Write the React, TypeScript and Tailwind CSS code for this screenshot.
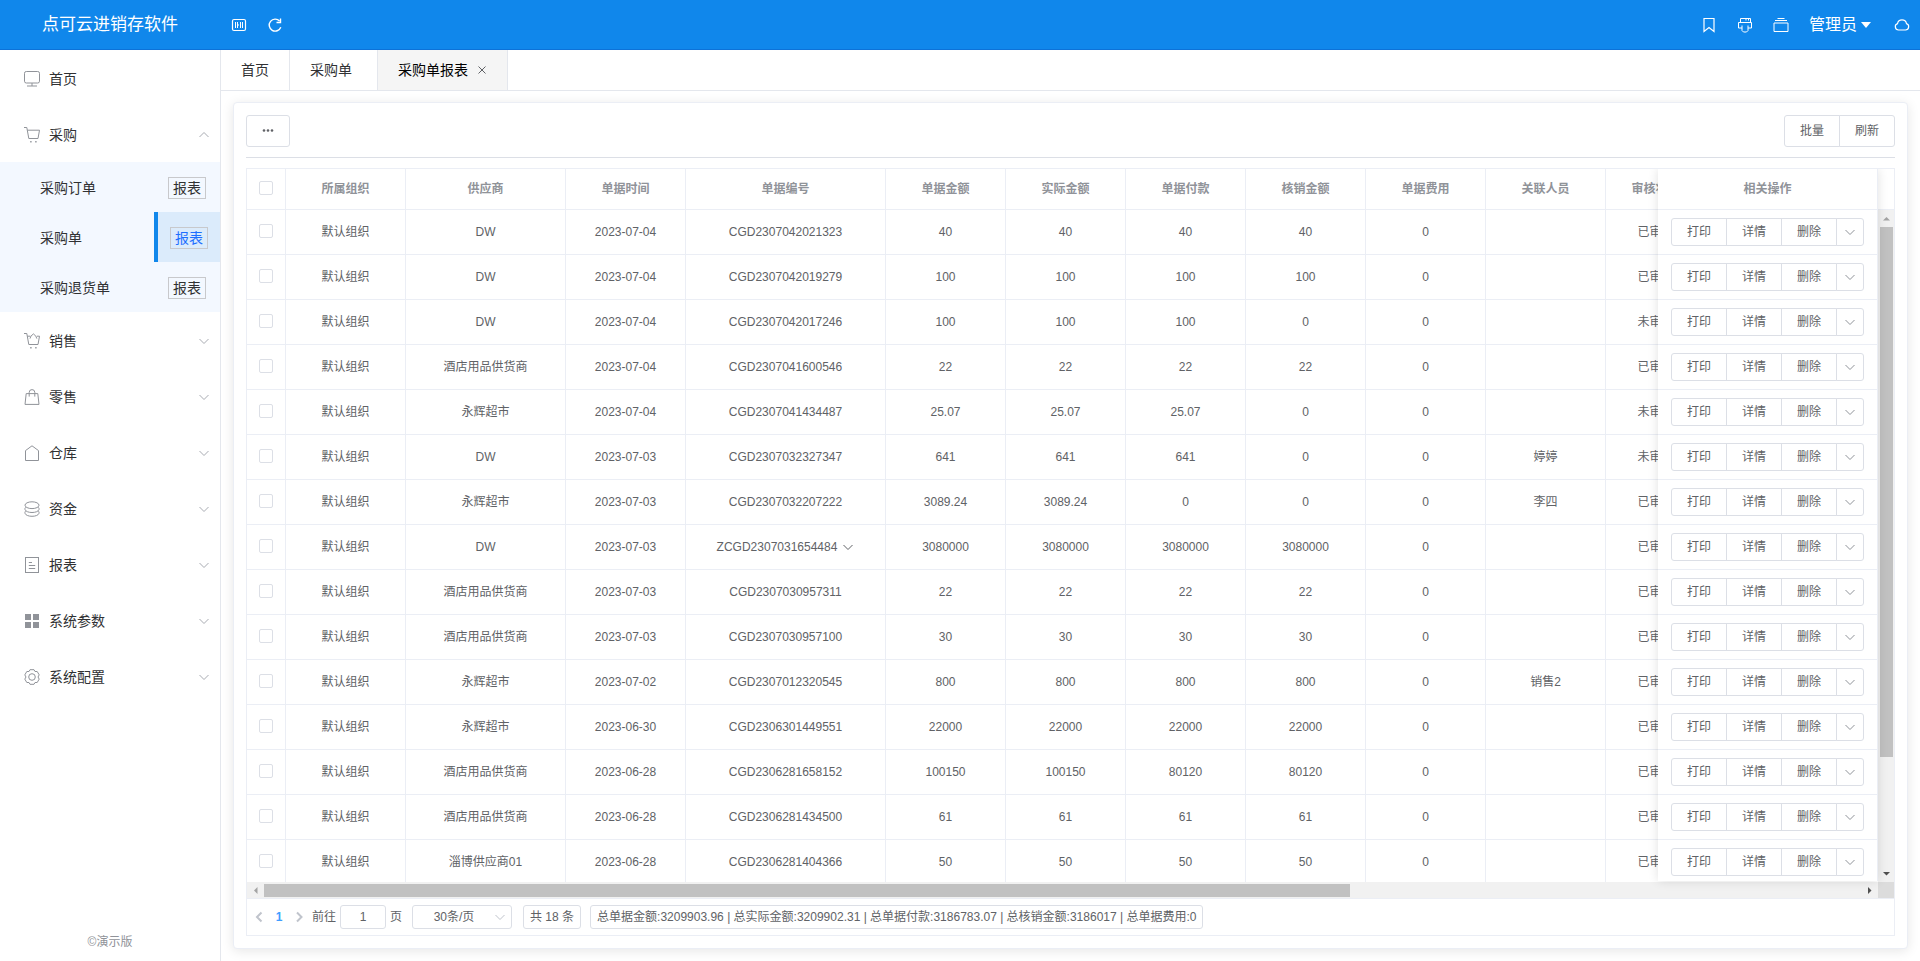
import type { ReactNode } from 'react';

type IconName =
  | 'monitor'
  | 'cart'
  | 'cartFull'
  | 'bag'
  | 'house'
  | 'coin'
  | 'report'
  | 'grid'
  | 'setting';

const ICONS: Record<IconName, ReactNode> = {
  monitor: (
    <>
      <rect x="0.5" y="0.5" width="15" height="11.5" rx="1.8" />
      <path d="M8 12v3M3 15h10" />
    </>
  ),
  cart: (
    <>
      <path d="M0 .5h2.8l2 11h9.2l1.5-8.3H3.4" />
      <path d="M6.2 14.8h1.4M11.2 14.8h1.4" strokeWidth="1.4" />
    </>
  ),
  cartFull: (
    <>
      <path d="M0 .5h2.8l2 11h9.2l1.5-8.3h-2.7M6.4 3.2h-3M6 5.6l.9-2.4L9.4.9l2.5 2.3.9 2.4" />
      <path d="M6.2 14.8h1.4M11.2 14.8h1.4" strokeWidth="1.4" />
    </>
  ),
  bag: (
    <>
      <path d="M2.2 4.6h11.6l1.2 10.8H1z" />
      <path d="M5.2 7.6V3.4a2.8 2.8 0 0 1 5.6 0v4.2" />
    </>
  ),
  house: <path d="M8 .8l6.5 4.8v9.9h-13V5.6z" />,
  coin: (
    <>
      <ellipse cx="8" cy="4.2" rx="7" ry="3.4" />
      <path d="M1.8 6.2C.9 7 .8 7.8 1 8.5c.6 1.9 3.500 3 7 3s6.400-1.100 7-3c.2-.7.1-1.500-.8-2.300" />
      <path d="M1.800 10C.9 10.800.8 11.600 1 12.300c.6 1.900 3.500 3 7 3s6.400-1.100 7-3c.2-.7.1-1.500-.8-2.300" />
    </>
  ),
  report: (
    <>
      <rect x="1.5" y="0.5" width="13" height="15" />
      <path d="M4.8 5.5H8M4.800 8.500h6.400M4.800 11.500h6.400" />
    </>
  ),
  grid: <path d="M1 1h6v6H1zM9 1h6v6H9zM1 9h6v6H1zM9 9h6v6H9z" fill="currentColor" stroke="none" />,
  setting: (
    <>
      <path
        d="M6 .7h4l1 1.8h2.2l2 3.4L14 8l1.2 2.1-2 3.4H11l-1 1.8H6l-1-1.8H2.8l-2-3.4L2 8 .8 5.9l2-3.4H5z"
        strokeLinejoin="round"
      />
      <circle cx="8" cy="8" r="3.3" />
    </>
  ),
};

function Icon({ children, className = 'size-4' }: { children: ReactNode; className?: string }) {
  return (
    <svg viewBox="0 0 16 16" className={className} fill="none" stroke="currentColor" strokeWidth="1" aria-hidden="true">
      {children}
    </svg>
  );
}

function Chevron({ dir = 'down', className = 'size-3' }: { dir?: 'up' | 'down' | 'left' | 'right'; className?: string }) {
  const paths = {
    up: 'M1.5 8L6 3.5 10.5 8',
    down: 'M1.5 4L6 8.5 10.5 4',
    left: 'M8.5 1.5L4 6l4.5 4.5',
    right: 'M4 1.5L8.5 6 4 10.5',
  };
  return (
    <svg viewBox="0 0 12 12" className={className} fill="none" stroke="currentColor" aria-hidden="true">
      <path d={paths[dir]} />
    </svg>
  );
}

const MENU: { icon: IconName; label: string }[] = [
  { icon: 'cartFull', label: '销售' },
  { icon: 'bag', label: '零售' },
  { icon: 'house', label: '仓库' },
  { icon: 'coin', label: '资金' },
  { icon: 'report', label: '报表' },
  { icon: 'grid', label: '系统参数' },
  { icon: 'setting', label: '系统配置' },
];

const SUBMENU = [
  { label: '采购订单', active: false },
  { label: '采购单', active: true },
  { label: '采购退货单', active: false },
];

const COLUMNS = [
  { label: '所属组织', width: 120 },
  { label: '供应商', width: 160 },
  { label: '单据时间', width: 120 },
  { label: '单据编号', width: 200 },
  { label: '单据金额', width: 120 },
  { label: '实际金额', width: 120 },
  { label: '单据付款', width: 120 },
  { label: '核销金额', width: 120 },
  { label: '单据费用', width: 120 },
  { label: '关联人员', width: 120 },
  { label: '审核状态', width: 100 },
];

// supplier, date, number, amount, actual, paid, settled, fee, person, status
const ROWS = [
  ['DW', '2023-07-04', 'CGD2307042021323', '40', '40', '40', '40', '0', '', '已审核'],
  ['DW', '2023-07-04', 'CGD2307042019279', '100', '100', '100', '100', '0', '', '已审核'],
  ['DW', '2023-07-04', 'CGD2307042017246', '100', '100', '100', '0', '0', '', '未审核'],
  ['酒店用品供货商', '2023-07-04', 'CGD2307041600546', '22', '22', '22', '22', '0', '', '已审核'],
  ['永辉超市', '2023-07-04', 'CGD2307041434487', '25.07', '25.07', '25.07', '0', '0', '', '未审核'],
  ['DW', '2023-07-03', 'CGD2307032327347', '641', '641', '641', '0', '0', '婷婷', '未审核'],
  ['永辉超市', '2023-07-03', 'CGD2307032207222', '3089.24', '3089.24', '0', '0', '0', '李四', '已审核'],
  ['DW', '2023-07-03', 'ZCGD2307031654484', '3080000', '3080000', '3080000', '3080000', '0', '', '已审核'],
  ['酒店用品供货商', '2023-07-03', 'CGD2307030957311', '22', '22', '22', '22', '0', '', '已审核'],
  ['酒店用品供货商', '2023-07-03', 'CGD2307030957100', '30', '30', '30', '30', '0', '', '已审核'],
  ['永辉超市', '2023-07-02', 'CGD2307012320545', '800', '800', '800', '800', '0', '销售2', '已审核'],
  ['永辉超市', '2023-06-30', 'CGD2306301449551', '22000', '22000', '22000', '22000', '0', '', '已审核'],
  ['酒店用品供货商', '2023-06-28', 'CGD2306281658152', '100150', '100150', '80120', '80120', '0', '', '已审核'],
  ['酒店用品供货商', '2023-06-28', 'CGD2306281434500', '61', '61', '61', '61', '0', '', '已审核'],
  ['淄博供应商01', '2023-06-28', 'CGD2306281404366', '50', '50', '50', '50', '0', '', '已审核'],
];

const CELL = 'border-r border-b border-[#ebeef5] p-0 text-center';
const BTN = 'border border-[#dcdfe6] bg-white text-xs text-[#606266]';

function TopBar() {
  return (
    <header className="flex h-[50px] shrink-0 items-center border-b border-[#0d72d8] bg-[#1087eb] text-white">
      <h1 className="w-[220px] text-center text-[17px]">点可云进销存软件</h1>
      <div className="flex items-center gap-5 pl-[11px]">
        <button type="button" aria-label="收起菜单">
          <Icon>
            <rect x="1.5" y="2.5" width="13" height="11" rx="1.5" strokeWidth="1.2" />
            <path d="M4.5 5v6M6.5 5v6M9.5 5v6M11.5 5v6M6.5 8h1.500" />
          </Icon>
        </button>
        <button type="button" aria-label="刷新页面">
          <Icon>
            <path d="M13.8 10.3A6 6 0 1 1 12.6 4" strokeWidth="1.4" />
            <path d="M13.5 1.5v4h-4" strokeWidth="1.4" />
          </Icon>
        </button>
      </div>
      <div className="ml-auto flex items-center pr-2.5">
        <div className="flex items-center gap-5">
          <button type="button" aria-label="书签">
            <Icon>
              <path d="M3 1.5h10v13l-5-4-5 4z" strokeWidth="1.2" />
            </Icon>
          </button>
          <button type="button" aria-label="打印">
            <Icon>
              <path d="M5 11H1.5V5.5h13V11H11M3.500 5.500v-4h10v4M5 8.500v5L6.500 15h3l1.500-1.500v-5M9 1.500v2M11.500 1.500v2" />
            </Icon>
          </button>
          <button type="button" aria-label="窗口">
            <Icon>
              <path d="M1 6h14v8.500H1zM2 3.500h12M4.500 1.500h7" />
            </Icon>
          </button>
          <button type="button" className="flex items-center gap-1 text-base">
            管理员
            <svg viewBox="0 0 10 6" className="h-1.5 w-2.5" fill="currentColor" aria-hidden="true">
              <path d="M0 0h10L5 6z" />
            </svg>
          </button>
        </div>
        <button type="button" aria-label="云端" className="ml-[23px]">
          <Icon>
            <path
              d="M4.5 13a3.3 3.3 0 0 1-1-6.4 4.6 4.6 0 0 1 9 0 3.3 3.3 0 0 1-1 6.4z"
              strokeWidth="1.2"
            />
          </Icon>
        </button>
      </div>
    </header>
  );
}

function MenuItem({ icon, label, arrow }: { icon: IconName; label: string; arrow?: 'up' | 'down' }) {
  return (
    <a href="#" className="flex h-14 items-center px-5 pt-0.5 text-sm text-[#303133]">
      <span className="mr-[5px] flex w-6 justify-center text-[#909399]">
        <Icon>{ICONS[icon]}</Icon>
      </span>
      {label}
      {arrow && (
        <span className="-mr-2.5 ml-auto text-[#a8abb2]">
          <Chevron dir={arrow} />
        </span>
      )}
    </a>
  );
}

function Sidebar() {
  return (
    <aside className="flex w-[221px] shrink-0 flex-col border-r border-[#e4e7ed] bg-white">
      <nav>
        <MenuItem icon="monitor" label="首页" />
        <MenuItem icon="cart" label="采购" arrow="up" />
        <ul className="bg-[#f3f8ff]">
          {SUBMENU.map((item) => (
            <li key={item.label} className="flex h-[50px] items-center justify-between pl-10 text-sm text-[#303133]">
              <a href="#" className="pt-0.5">
                {item.label}
              </a>
              <a
                href="#"
                className={
                  item.active
                    ? 'flex h-full w-[66px] items-center border-l-4 border-[#1087eb] bg-[#dbebfb] pt-0.5 pl-3 text-[#1e6fff]'
                    : 'flex h-full w-[66px] items-center pt-0.5 pl-3.5'
                }
              >
                <span className="flex h-[22px] w-[38px] items-center justify-center border border-[#c8c9cc]">报表</span>
              </a>
            </li>
          ))}
        </ul>
        {MENU.map((item) => (
          <MenuItem key={item.label} icon={item.icon} label={item.label} arrow="down" />
        ))}
      </nav>
      <p className="mt-auto pb-2.5 text-center text-xs leading-[18px] text-[#909399]">©演示版</p>
    </aside>
  );
}

function Tabs() {
  return (
    <div className="flex h-[41px] shrink-0 border-b border-[#e4e7ed] text-sm text-[#303133]">
      <button type="button" className="border-r border-[#e4e7ed] px-5">
        首页
      </button>
      <button type="button" className="border-r border-[#e4e7ed] pr-[25px] pl-5">
        采购单
      </button>
      <div className="flex items-center border-r border-[#e4e7ed] bg-[#f5f5f5] pr-[19px] pl-5 text-black">
        <button type="button">采购单报表</button>
        <button type="button" aria-label="关闭" className="ml-2 text-[#606266]">
          <svg viewBox="0 0 12 12" className="size-3" fill="none" stroke="currentColor" aria-hidden="true">
            <path d="M2.5 2.5l7 7M9.5 2.5l-7 7" />
          </svg>
        </button>
      </div>
    </div>
  );
}

function CheckBox({ label }: { label: string }) {
  return (
    <input
      type="checkbox"
      aria-label={label}
      className="mx-auto block size-3.5 appearance-none rounded-[2px] border border-[#dcdfe6] bg-white"
    />
  );
}

function DataTable() {
  return (
    <div className="min-w-0 flex-1 overflow-hidden">
      <table className="w-[1459px] table-fixed border-separate border-spacing-0 text-xs text-[#606266]">
        <colgroup>
          <col style={{ width: 39 }} />
          {COLUMNS.map((col) => (
            <col key={col.label} style={{ width: col.width }} />
          ))}
        </colgroup>
        <thead>
          <tr className="h-[41px] text-[#909399]">
            <th className={`${CELL} pb-0.5`}>
              <CheckBox label="全选" />
            </th>
            {COLUMNS.map((col) => (
              <th key={col.label} className={`${CELL} font-bold`}>
                {col.label}
              </th>
            ))}
          </tr>
        </thead>
        <tbody>
          {ROWS.map((row) => (
            <tr key={row[2]} className="h-[45px]">
              <td className={`${CELL} pb-0.5`}>
                <CheckBox label={row[2]} />
              </td>
              <td className={CELL}>默认组织</td>
              {row.map((value, i) => (
                <td key={i} className={CELL}>
                  {value.startsWith('Z') ? (
                    <span className="inline-flex items-center gap-[5px]">
                      {value}
                      <Chevron />
                    </span>
                  ) : (
                    value
                  )}
                </td>
              ))}
            </tr>
          ))}
        </tbody>
      </table>
    </div>
  );
}

function ActionTable() {
  return (
    <div className="relative z-10 mb-px w-[220px] shrink-0 bg-white shadow-[0_0_10px_rgba(0,0,0,0.12)]">
      <div className="h-full overflow-hidden">
        <table className="w-full table-fixed border-separate border-spacing-0 text-xs text-[#606266]">
          <thead>
            <tr className="h-[41px] text-[#909399]">
              <th className={`${CELL} font-bold`}>相关操作</th>
            </tr>
          </thead>
          <tbody>
            {ROWS.map((row) => (
              <tr key={row[2]} className="h-[45px]">
                <td className={CELL}>
                  <div className="flex justify-center">
                    <button type="button" className={`${BTN} h-7 w-14 rounded-l-[3px]`}>
                      打印
                    </button>
                    <button type="button" className={`${BTN} -ml-px h-7 w-14`}>
                      详情
                    </button>
                    <button type="button" className={`${BTN} -ml-px h-7 w-14`}>
                      删除
                    </button>
                    <button
                      type="button"
                      aria-label="更多"
                      className={`${BTN} -ml-px flex h-7 w-7 items-center justify-center rounded-r-[3px]`}
                    >
                      <Chevron className="size-3 text-[#909399]" />
                    </button>
                  </div>
                </td>
              </tr>
            ))}
          </tbody>
        </table>
      </div>
    </div>
  );
}

function Arrow({ d, className }: { d: string; className: string }) {
  return (
    <svg viewBox="0 0 17 17" className={className} fill="currentColor" aria-hidden="true">
      <path d={d} />
    </svg>
  );
}

function Pager() {
  return (
    <footer className="box-content flex h-9 shrink-0 items-center border-t border-[#ebeef5] pl-1.5 text-xs text-[#606266]">
      <button type="button" aria-label="上一页" className="text-[#c0c4cc]">
        <Chevron dir="left" className="size-3 stroke-2" />
      </button>
      <button type="button" className="ml-2 w-3 font-bold text-[#409eff]">
        1
      </button>
      <button type="button" aria-label="下一页" className="ml-2 text-[#c0c4cc]">
        <Chevron dir="right" className="size-3 stroke-2" />
      </button>
      <label htmlFor="page" className="ml-[7px]">
        前往
      </label>
      <input
        id="page"
        defaultValue="1"
        className="ml-1 h-6 w-[46px] rounded-[3px] border border-[#dcdfe6] text-center"
      />
      <span className="ml-1">页</span>
      <div className="relative ml-2.5">
        <select
          aria-label="每页条数"
          defaultValue="30"
          className="block h-6 w-[100px] appearance-none rounded-[3px] border border-[#dcdfe6] bg-white pr-4 text-center"
        >
          <option value="30">30条/页</option>
          <option value="60">60条/页</option>
          <option value="90">90条/页</option>
        </select>
        <Chevron className="pointer-events-none absolute top-1.5 right-1.5 size-3 text-[#c0c4cc]" />
      </div>
      <span className="ml-[11px] flex h-6 items-center rounded-[3px] border border-[#dcdfe6] px-1.5">共 18 条</span>
      <span className="ml-[9px] flex h-6 items-center rounded-[3px] border border-[#dcdfe6] px-1.5">
        总单据金额:3209903.96 | 总实际金额:3209902.31 | 总单据付款:3186783.07 | 总核销金额:3186017 | 总单据费用:0
      </span>
    </footer>
  );
}

function ReportCard() {
  return (
    <section className="m-3 mt-[11px] flex min-h-0 flex-1 flex-col rounded-[4px] border border-[#ebeef5] bg-white p-3 shadow-[0_2px_12px_rgba(0,0,0,0.1)]">
      <div className="mb-2.5 flex justify-between border-b border-[#dcdfe6] pb-2.5">
        <button
          type="button"
          aria-label="筛选"
          className={`${BTN} flex h-8 w-11 items-center justify-center rounded-[3px]`}
        >
          <svg viewBox="0 0 12 12" className="size-3" fill="currentColor" aria-hidden="true">
            <circle cx="2" cy="5.5" r="1.3" />
            <circle cx="6" cy="5.5" r="1.3" />
            <circle cx="10" cy="5.5" r="1.3" />
          </svg>
        </button>
        <div className="flex">
          <button type="button" className={`${BTN} h-8 w-14 rounded-l-[3px]`}>
            批量
          </button>
          <button type="button" className={`${BTN} -ml-px h-8 w-14 rounded-r-[3px]`}>
            刷新
          </button>
        </div>
      </div>

      <div className="flex min-h-0 flex-1 flex-col overflow-hidden border border-[#ebeef5]">
        <div className="flex min-h-0 flex-1">
          <DataTable />
          <ActionTable />
          <div className="flex w-4 shrink-0 flex-col">
            <div className="h-[41px] shrink-0 border-b border-[#ebeef5]" />
            <div className="flex min-h-0 flex-1 flex-col items-center bg-[#f1f1f1]">
              <Arrow d="M5 10.500h7L8.500 7z" className="size-[17px] shrink-0 text-[#a3a3a3]" />
              <div className="flex w-[13px] flex-1 flex-col">
                <div className="h-[83%] bg-[#c1c1c1]" />
              </div>
              <Arrow d="M5 7h7l-3.500 3.500z" className="size-[17px] shrink-0 text-[#505050]" />
            </div>
          </div>
        </div>
        <div className="flex h-4 shrink-0 bg-[#f1f1f1]">
          <div className="flex flex-1 items-center">
            <Arrow d="M10.500 5v7L7 8.500z" className="size-[17px] shrink-0 text-[#a3a3a3]" />
            <div className="flex h-[13px] flex-1">
              <div className="w-[68%] bg-[#c1c1c1]" />
            </div>
            <Arrow d="M7 5v7l3.500-3.500z" className="size-[17px] shrink-0 text-[#505050]" />
          </div>
          <div className="w-4 bg-[#dcdcdc]" />
        </div>
        <Pager />
      </div>
    </section>
  );
}

export default function App() {
  return (
    <div className="flex h-screen flex-col overflow-hidden bg-white font-['Liberation_Sans','Noto_Sans_CJK_SC',sans-serif]">
      <TopBar />
      <div className="flex min-h-0 flex-1">
        <Sidebar />
        <main className="flex min-w-0 flex-1 flex-col overflow-hidden">
          <Tabs />
          <ReportCard />
        </main>
      </div>
    </div>
  );
}
